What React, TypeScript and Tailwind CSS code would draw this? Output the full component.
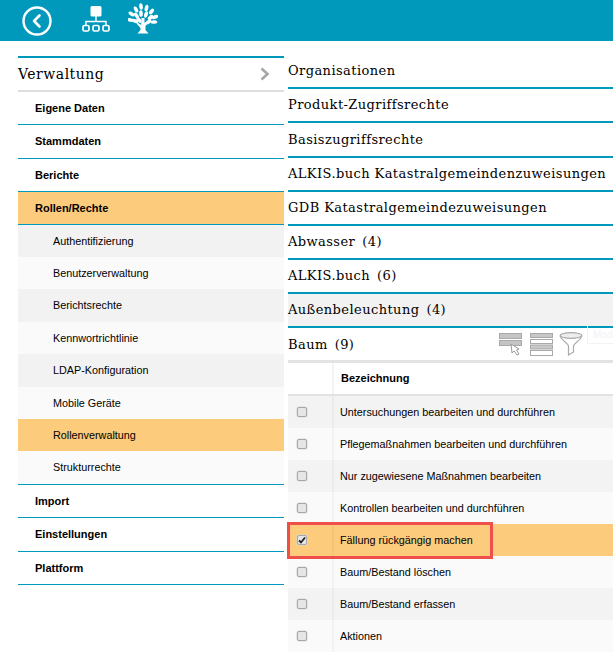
import React from 'react';

const serif = "font-['DejaVu_Serif','Liberation_Serif',serif]";

const subItems = [
  { label: 'Authentifizierung', cls: 'h-[32px] bg-[#f2f2f2]' },
  { label: 'Benutzerverwaltung', cls: 'h-[32px] bg-[#fafafa]' },
  { label: 'Berichtsrechte', cls: 'h-[33px] bg-[#f2f2f2]' },
  { label: 'Kennwortrichtlinie', cls: 'h-[32px] bg-[#fafafa]' },
  { label: 'LDAP-Konfiguration', cls: 'h-[33px] bg-[#f2f2f2]' },
  { label: 'Mobile Geräte', cls: 'h-[32px] bg-[#fafafa]' },
  { label: 'Rollenverwaltung', cls: 'h-[32px] bg-[#fccb7b]' },
  { label: 'Strukturrechte', cls: 'h-[33px] bg-[#fafafa]' },
];

const groups = [
  { label: 'Organisationen', cls: 'h-[34px]' },
  { label: 'Produkt-Zugriffsrechte', cls: 'h-[34px]' },
  { label: 'Basiszugriffsrechte', cls: 'h-[35px]' },
  { label: 'ALKIS.buch Katastralgemeindenzuweisungen', cls: 'h-[34px]' },
  { label: 'GDB Katastralgemeindezuweisungen', cls: 'h-[34px]' },
  { label: 'Abwasser', count: '(4)', cls: 'h-[34px]' },
  { label: 'ALKIS.buch', count: '(6)', cls: 'h-[34px]' },
  { label: 'Außenbeleuchtung', count: '(4)', cls: 'h-[34px] bg-[#f2f2f2]' },
];

const rows = [
  { label: 'Untersuchungen bearbeiten und durchführen', bg: 'bg-[#f3f3f3]' },
  { label: 'Pflegemaßnahmen bearbeiten und durchführen', bg: 'bg-[#fafafa]' },
  { label: 'Nur zugewiesene Maßnahmen bearbeiten', bg: 'bg-[#f3f3f3]' },
  { label: 'Kontrollen bearbeiten und durchführen', bg: 'bg-[#fafafa]' },
  { label: 'Fällung rückgängig machen', bg: 'bg-[#fccb7b]', checked: true },
  { label: 'Baum/Bestand löschen', bg: 'bg-[#fafafa]' },
  { label: 'Baum/Bestand erfassen', bg: 'bg-[#f3f3f3]' },
  { label: 'Aktionen', bg: 'bg-[#fafafa]' },
];

const BackIcon = () => (
  <svg width="30" height="30" viewBox="0 0 30 30" fill="none" stroke="white">
    <circle cx="15" cy="15" r="13.5" strokeWidth="2.4" />
    <path d="M17.5 9.5 L12 15 L17.5 20.5" strokeWidth="2.6" strokeLinecap="round" strokeLinejoin="round" />
  </svg>
);

const OrgIcon = () => (
  <svg width="28" height="26" viewBox="0 0 28 26" fill="none" stroke="white">
    <rect x="8.5" y="0" width="11" height="10.5" rx="1.5" fill="white" stroke="none" />
    <path d="M14 10 V15 M4 19 V15.5 H24 V19" strokeWidth="1.4" />
    <rect x="1" y="19.5" width="6" height="5.5" rx="1.5" strokeWidth="1.7" />
    <rect x="11" y="19.5" width="6" height="5.5" rx="1.5" strokeWidth="1.7" />
    <rect x="21" y="19.5" width="6" height="5.5" rx="1.5" strokeWidth="1.7" />
  </svg>
);

// leaves of the tree, each one rotated around its own centre
const leaves = [
  [13, 3.5, -6], [18.5, 5, 14], [8, 6.5, -28], [23.5, 8.5, 40], [3.5, 11, -55],
  [13, 10.5, -4], [18, 11.5, 16], [8.5, 12.5, -35], [27, 14, 70], [22.5, 14.5, 50],
  [2.5, 17, -80], [7, 18, -70], [26, 19, 85], [20.5, 19, 60], [11, 17, -40],
];

const TreeIcon = () => (
  <svg width="30" height="31" viewBox="0 0 30 31" fill="white">
    {leaves.map(([x, y, r]) => (
      <ellipse key={`${x}-${y}`} cx={x} cy={y} rx="1.8" ry="3.3" transform={`rotate(${r} ${x} ${y})`} />
    ))}
    <path d="M13.5 15 H16.5 V20 L20 17.5 L21 18.8 L17.5 23 V27 L20.5 30.5 H9.5 L12.5 27 V25 L8.5 20.5 L9.5 19.5 L13.2 22 Z" />
  </svg>
);

const SelectRowIcon = () => (
  <svg width="25" height="23" viewBox="0 0 25 23" fill="#c4c4c4" stroke="#a9a9a9">
    <rect x="0.5" y="0.5" width="22" height="5" />
    <rect x="0.5" y="7.5" width="22" height="5" />
    <path d="M12 11 L13 20 L15 18 L18 22 L20 21 L17.5 17 L20 16 Z" fill="white" stroke="#999" />
  </svg>
);

const ListIcon = () => (
  <svg width="23" height="23" viewBox="0 0 23 23" fill="#c8c8c8" stroke="#a9a9a9">
    <rect x="0.5" y="0.5" width="22" height="4" />
    <rect x="0.5" y="6.5" width="22" height="4" fill="white" />
    <rect x="0.5" y="12" width="22" height="4" />
    <rect x="0.5" y="17.5" width="22" height="5" fill="white" />
  </svg>
);

const FunnelIcon = () => (
  <svg width="24" height="24" viewBox="0 0 24 24" fill="none" stroke="#a9a9a9" strokeWidth="1.2">
    <path d="M1.2 4 C2 8 9 11 9.5 14 V23 L14.5 20 V14 C15 11 22 8 22.8 4" fill="white" />
    <ellipse cx="12" cy="3.5" rx="10.8" ry="2.8" fill="#ededed" />
  </svg>
);

const CheckBox = ({ checked }: { checked?: boolean }) => (
  <span className="flex h-[10px] w-[10px] items-center justify-center rounded-[2px] border border-[#a8a8a8] bg-[#e6e6e6] shadow-[0_0_0_0.5px_#d8d8d8]">
    {checked && (
      <svg width="8" height="8" viewBox="0 0 8 8" fill="none" stroke="#222" strokeWidth="1.8">
        <path d="M1 4.5 L3 6.5 L7 1.5" />
      </svg>
    )}
  </span>
);

const MainItem = ({ label, cls }: { label: string; cls: string }) => (
  <div className={`flex items-center pl-[17px] text-[11px] font-bold text-black ${cls}`}>{label}</div>
);

export default function App() {
  return (
    <div className="h-[660px] w-[613px] overflow-hidden bg-white font-['Liberation_Sans',Arial,sans-serif] text-black">
      <header className="flex h-[41px] items-center bg-[#0099bc] pl-[22px]">
        <BackIcon />
        <div className="ml-[30px] mb-[4px]"><OrgIcon /></div>
        <div className="ml-[18px] mb-[5px]"><TreeIcon /></div>
      </header>

      <div className="flex pt-[15px]">
        <nav className="ml-[18px] w-[266px] shrink-0">
          <div className={`box-content flex h-[32px] items-center justify-between border-t-2 border-b-2 border-t-[#0099bc] border-b-[#dedede] pr-[14px] text-[14px] tracking-[0.5px] ${serif}`}>
            <span>Verwaltung</span>
            <svg width="10" height="14" viewBox="0 0 10 14" fill="none" stroke="#a6a6a6" strokeWidth="2.6">
              <path d="M1.5 1.5 L7.5 7 L1.5 12.5" />
            </svg>
          </div>
          <MainItem label="Eigene Daten" cls="h-[33px] border-b border-[#0099bc]" />
          <MainItem label="Stammdaten" cls="h-[34px] border-b border-[#0099bc]" />
          <MainItem label="Berichte" cls="h-[33px] border-b border-[#0099bc]" />
          <MainItem label="Rollen/Rechte" cls="h-[33px] border-b border-[#0099bc] bg-[#fccb7b]" />
          {subItems.map((item) => (
            <div key={item.label} className={`flex items-center pl-[35px] text-[10.8px] ${item.cls}`}>
              {item.label}
            </div>
          ))}
          <div className="border-t border-[#0099bc]">
            <MainItem label="Import" cls="h-[33px] border-b border-[#0099bc]" />
            <MainItem label="Einstellungen" cls="h-[34px] border-b border-[#0099bc]" />
            <MainItem label="Plattform" cls="h-[33px] border-b border-[#0099bc]" />
          </div>
        </nav>

        <main className="relative ml-[4px] -mt-[1px] w-[325px] shrink-0">
          {groups.map((group) => (
            <div
              key={group.label}
              className={`flex items-center whitespace-nowrap border-b-2 border-[#0099bc] text-[13px] tracking-[0.42px] ${serif} ${group.cls}`}
            >
              <span>{group.label}</span>
              {group.count && <span className="ml-[7px]">{group.count}</span>}
            </div>
          ))}

          <div className={`flex h-[32px] items-center text-[13px] tracking-[0.42px] ${serif}`}>
            <span className="pt-[2px]">Baum</span>
            <span className="ml-[7px] pt-[2px]">(9)</span>
            <div className="ml-auto mr-[30px] flex items-center gap-[6px]">
              <SelectRowIcon />
              <ListIcon />
              <FunnelIcon />
            </div>
          </div>
          <div className="absolute right-0 top-[270px] h-[19px] w-[26px] border border-r-0 border-[#f3f3f3] pl-[5px] text-[10px] leading-[17px] text-[#f2f2f2]">
            Mod
          </div>

          <div className="border-t-[3px] border-b-[2px] border-[#e3e3e3]">
            <div className="flex h-[31px] items-center">
              <div className="h-full w-[46px] border-r-2 border-[#f3f3f3]" />
              <div className="pl-[7px] text-[11px] font-bold">Bezeichnung</div>
            </div>
          </div>
          {rows.map((row) => (
            <div key={row.label} className={`flex h-[32px] items-center text-[10.8px] ${row.bg}`}>
              <div className="flex h-full w-[46px] items-center border-r-2 border-[#00000008] pl-[9px]">
                <CheckBox checked={row.checked} />
              </div>
              <div className="pl-[6px]">{row.label}</div>
            </div>
          ))}
          <div className="absolute left-[-1px] top-[467px] h-[37px] w-[206px] border-[3px] border-[#ef4f4a]" />
        </main>
      </div>
    </div>
  );
}
